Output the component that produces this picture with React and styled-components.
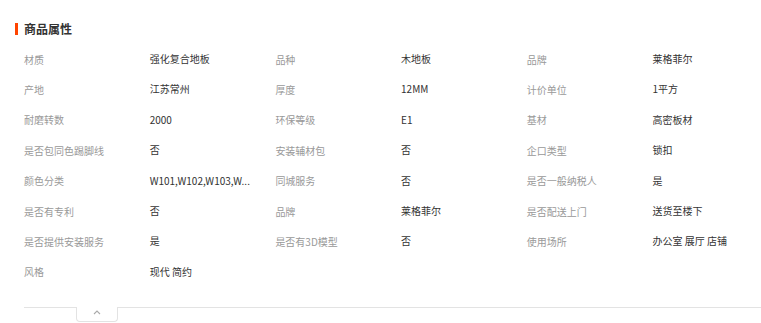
import React from "react"
import styled, { createGlobalStyle } from "styled-components"

const attrs = [
  ["材质", "强化复合地板"],
  ["品种", "木地板"],
  ["品牌", "莱格菲尔"],
  ["产地", "江苏常州"],
  ["厚度", "12MM"],
  ["计价单位", "1平方"],
  ["耐磨转数", "2000"],
  ["环保等级", "E1"],
  ["基材", "高密板材"],
  ["是否包同色踢脚线", "否"],
  ["安装辅材包", "否"],
  ["企口类型", "锁扣"],
  ["颜色分类", "W101,W102,W103,W..."],
  ["同城服务", "否"],
  ["是否一般纳税人", "是"],
  ["是否有专利", "否"],
  ["品牌", "莱格菲尔"],
  ["是否配送上门", "送货至楼下"],
  ["是否提供安装服务", "是"],
  ["是否有3D模型", "否"],
  ["使用场所", "办公室 展厅 店铺"],
  ["风格", "现代 简约"],
]

export default function App() {
  return (
    <Root>
      <GlobalStyle />
      <Header>
        <Bar />
        <Title>商品属性</Title>
      </Header>
      <Grid>
        {attrs.map(([label, value], i) => (
          <React.Fragment key={i}>
            <Label>{label}</Label>
            <Value>{value}</Value>
          </React.Fragment>
        ))}
      </Grid>
      <Footer>
        <Tab>
          <svg width="8" height="5" viewBox="0 0 8 5">
            <path d="M1 4 L4 1 L7 4" fill="none" stroke="#aaa" strokeWidth="1.1" />
          </svg>
        </Tab>
      </Footer>
    </Root>
  )
}

const GlobalStyle = createGlobalStyle`
  body {
    margin: 0;
    background: #fff;
    font-family: "Noto Sans CJK SC", "Noto Sans", sans-serif;
  }
`

const Root = styled.div`
  width: 761px;
  padding-top: 21px;
  box-sizing: border-box;
  overflow: hidden;
`

const Header = styled.div`
  display: flex;
  align-items: center;
  padding-left: 15px;
  height: 16px;
`

const Bar = styled.span`
  width: 3px;
  height: 12px;
  background: #ff4400;
  margin-right: 6px;
`

const Title = styled.h3`
  margin: 0;
  font-size: 12px;
  font-weight: 700;
  color: #333;
  line-height: 16px;
`

const Grid = styled.div`
  display: grid;
  grid-template-columns: repeat(6, 125.7px);
  grid-auto-rows: 30.4px;
  margin-top: 7px;
  padding-left: 24px;
`

const Label = styled.div`
  display: flex;
  align-items: center;
  font-size: 10px;
  color: #999;
  white-space: nowrap;
`

const Value = styled.div`
  font-size: 10px;
  line-height: 30.4px;
  color: #333;
  white-space: nowrap;
  padding-right: 20px;
`

const Footer = styled.div`
  margin: 20px 0 0 24px;
  border-top: 1px solid #e3e3e3;
  height: 16px;
`

const Tab = styled.div`
  margin: -1px 0 0 52px;
  width: 42px;
  height: 15px;
  background: #fff;
  border: 1px solid #e3e3e3;
  border-top: none;
  border-radius: 0 0 4px 4px;
  display: flex;
  justify-content: center;
  padding-top: 3px;
  box-sizing: border-box;
`
